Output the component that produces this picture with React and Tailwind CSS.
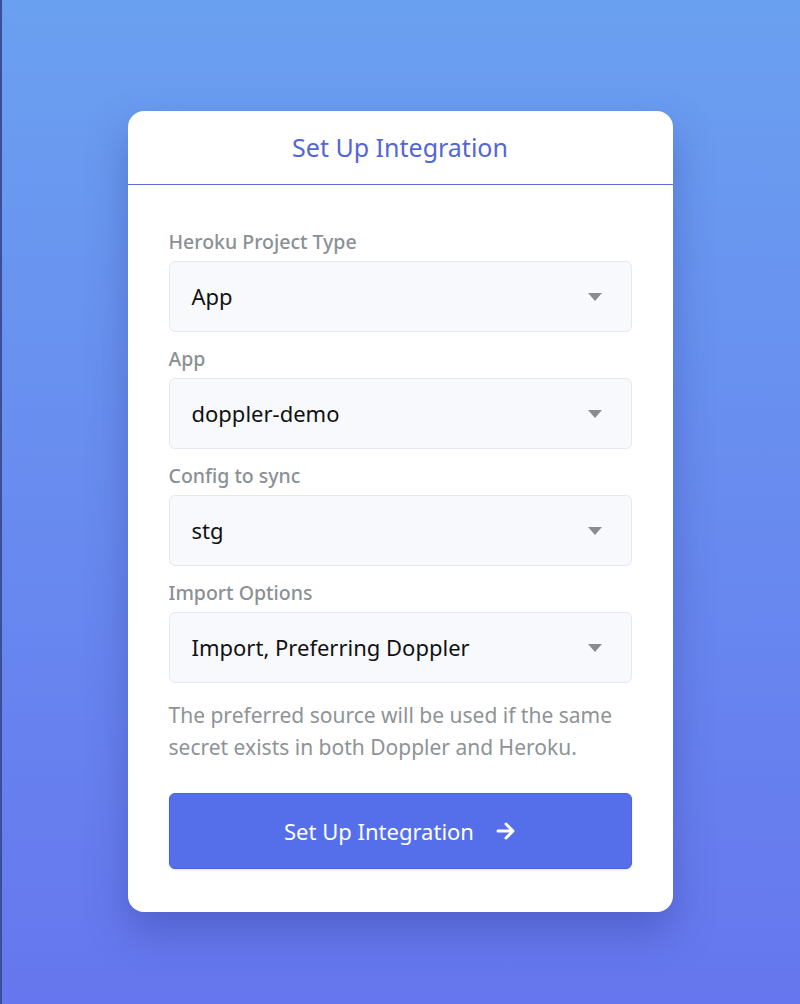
import React from 'react';

const font = { fontFamily: '"Noto Sans", "Open Sans", sans-serif' };

const fields = [
  { label: 'Heroku Project Type', value: 'App' },
  { label: 'App', value: 'doppler-demo' },
  { label: 'Config to sync', value: 'stg' },
  { label: 'Import Options', value: 'Import, Preferring Doppler' },
];

const Caret = () => (
  <svg width="14" height="8" viewBox="0 0 14 8" className="shrink-0">
    <path d="M0 0 H14 L7 8 Z" fill="#8a8d90" />
  </svg>
);

const Field = ({ label, value }) => (
  <div className="flex flex-col">
    <label className="text-[19.5px] leading-[24px] font-medium text-[#8b9095]">{label}</label>
    <div className="mt-[7px] h-[71px] flex items-center justify-between pl-[22px] pr-[29px] rounded-[6px] bg-[#f8f9fd] border border-[#e4e7f5]">
      <span className="text-[22px] text-[#111]">{value}</span>
      <Caret />
    </div>
  </div>
);

export default function App() {
  return (
    <div
      className="w-[800px] h-[1004px] flex items-start justify-center pt-[111px] bg-gradient-to-b from-[#6aa0f0] to-[#6676ee] shadow-[inset_2px_0_0_#3b4f98]"
      style={font}
    >
      <div className="w-[545px] bg-white rounded-[16px] shadow-[0_20px_40px_rgba(40,50,140,0.35)] overflow-hidden">
        <div className="h-[74px] flex items-center justify-center border-b border-[#5b70cf]">
          <h1 className="text-[25px] text-[#5366d6]">Set Up Integration</h1>
        </div>
        <div className="px-[41px] pt-[45px] pb-[43px] flex flex-col gap-[15px]">
          {fields.map((f) => (
            <Field key={f.label} {...f} />
          ))}
          <p className="mt-[1px] text-[21px] leading-[32px] text-[#8e9396]">
            The preferred source will be used if the same secret exists in both Doppler and Heroku.
          </p>
          <button className="mt-[15px] h-[76px] flex items-center justify-center gap-[22px] rounded-[6px] bg-[#556fea] border border-[#4a63d8] text-white text-[22px] shadow-sm">
            <span>Set Up Integration</span>
            <svg width="20" height="20" viewBox="0 0 20 20" fill="none" stroke="white" strokeWidth="3" strokeLinecap="round" strokeLinejoin="round">
              <path d="M2 10 H17 M10 3 L17 10 L10 17" />
            </svg>
          </button>
        </div>
      </div>
    </div>
  );
}
